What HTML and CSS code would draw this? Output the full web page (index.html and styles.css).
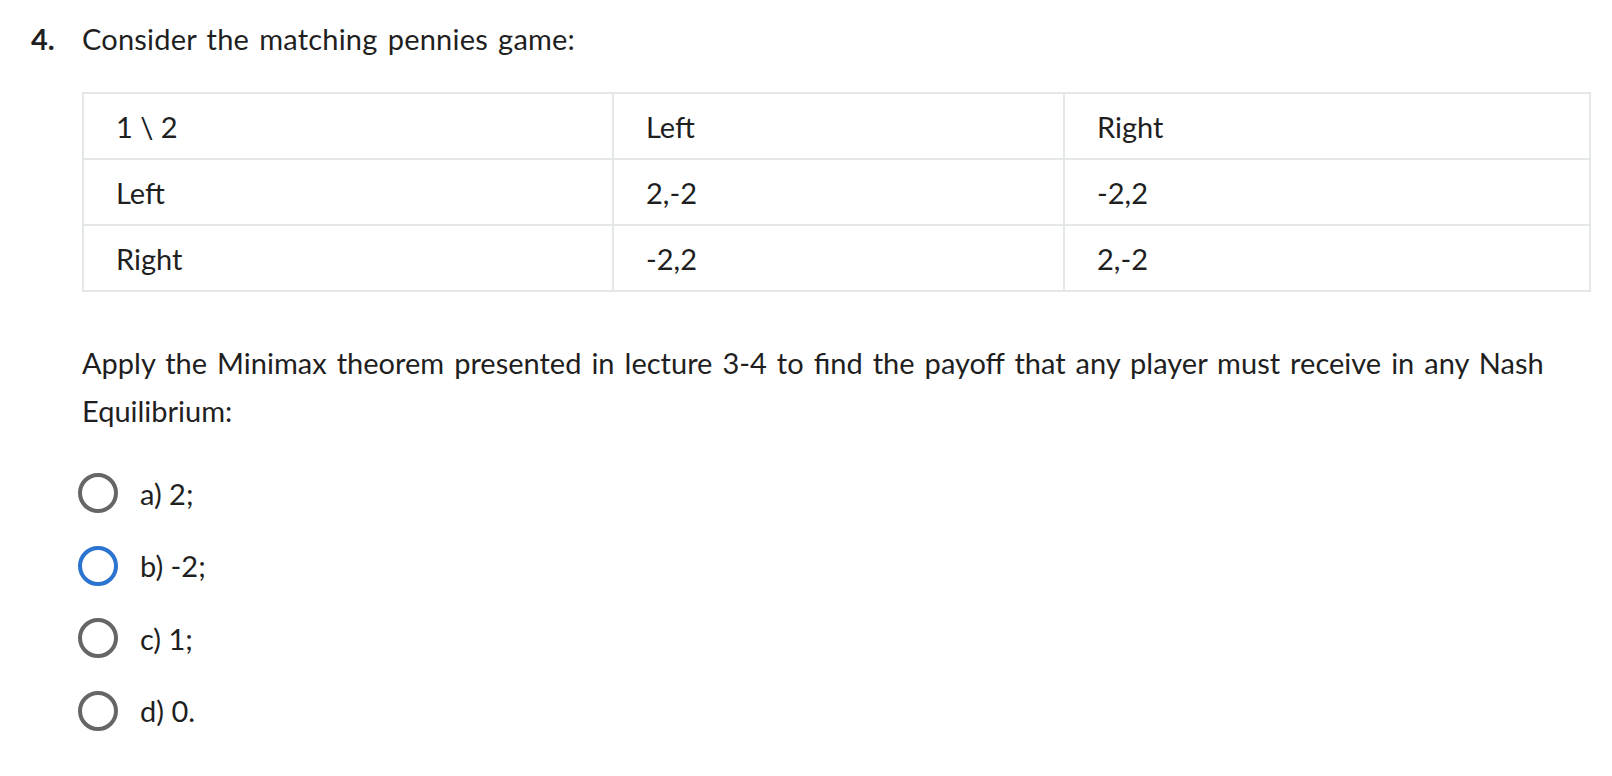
FILE: index.html
```html
<!DOCTYPE html>
<html>
<head>
<meta charset="utf-8">
<link rel="stylesheet" href="styles.css">
</head>
<body>
<div class="question">
  <div class="num">4.</div>
  <div class="content">
    <div class="prompt">Consider the matching pennies game:</div>
    <table class="payoff">
      <tr><td>1 \ 2</td><td>Left</td><td>Right</td></tr>
      <tr><td>Left</td><td>2,-2</td><td>-2,2</td></tr>
      <tr><td>Right</td><td>-2,2</td><td>2,-2</td></tr>
    </table>
    <p class="text">Apply the Minimax theorem presented in lecture 3-4 to find the payoff that any player must receive in any Nash Equilibrium:</p>
    <div class="options">
      <label class="option"><span class="radio"></span><span class="label">a) 2;</span></label>
      <label class="option"><span class="radio focused"></span><span class="label">b) -2;</span></label>
      <label class="option"><span class="radio"></span><span class="label">c) 1;</span></label>
      <label class="option"><span class="radio"></span><span class="label">d) 0.</span></label>
    </div>
  </div>
</div>
</body>
</html>
```
FILE: styles.css
```css
html, body {
  margin: 0;
  padding: 0;
  background: #ffffff;
}
body {
  font-family: "Lato", "Liberation Sans", sans-serif;
  font-size: 29px;
  color: #1f1f1f;
}
.question {
  display: flex;
  padding: 19px 21px 0 31px;
}
.num {
  width: 51px;
  flex: none;
  font-weight: 700;
  line-height: 40px;
}
.content {
  flex: 1;
}
.prompt {
  line-height: 40px;
  word-spacing: 2.6px;
  letter-spacing: 0.2px;
}
.payoff {
  margin-top: 33px;
  width: 100%;
  border-collapse: collapse;
  border: 2px solid #e4e7e8;
}
.payoff td {
  border: 2px solid #e4e7e8;
  height: 64px;
  padding: 0 0 0 32px;
  vertical-align: middle;
}
.payoff td:nth-child(1) { width: 496px; }
.payoff td:nth-child(2) { width: 417px; }
.text {
  margin: 47px 0 0 0;
  line-height: 48px;
  word-spacing: 2.6px;
}
.options {
  margin: 22px 0 0 -4px;
  display: flex;
  flex-direction: column;
}
.option {
  display: flex;
  align-items: center;
  height: 72.5px;
}
.radio {
  width: 32px;
  height: 32px;
  border: 4px solid #666666;
  border-radius: 50%;
  flex: none;
}
.radio.focused {
  border-color: #2b74cf;
}
.label {
  margin-left: 22px;
}
```
